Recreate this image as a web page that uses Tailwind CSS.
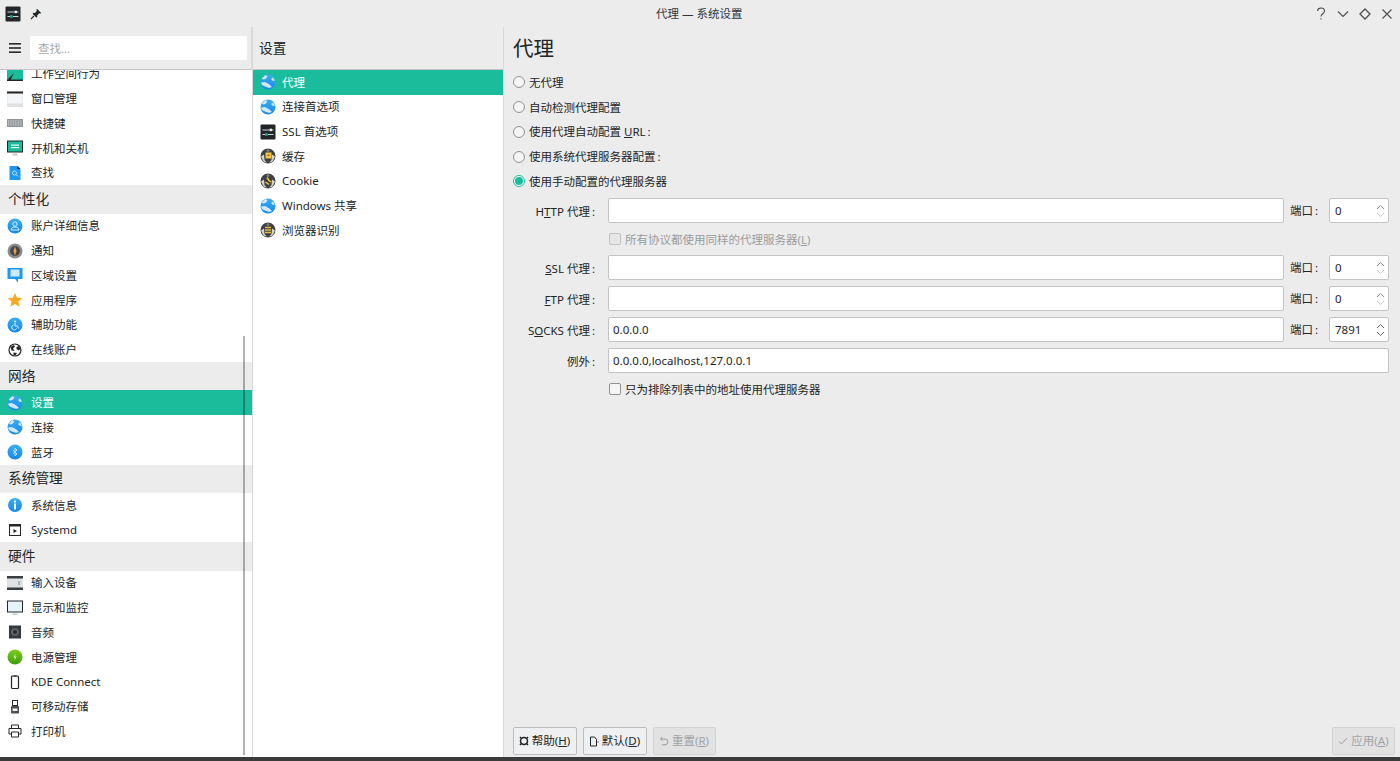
<!DOCTYPE html>
<html lang="zh-CN">
<head>
    <meta charset="UTF-8">
    <meta name="viewport" content="width=device-width, initial-scale=1.0">
    <title>代理 — 系统设置</title>
    <script src="https://cdn.jsdelivr.net/npm/@tailwindcss/browser@4"></script>
</head>
<body class="w-[1400px] h-[761px] overflow-hidden flex flex-col bg-[#ececec] text-[#232627] text-[11.5px] font-['Noto_Sans','Noto_Sans_CJK_SC',sans-serif]">

    <!-- shared icons -->
    <svg class="absolute w-0 h-0">
        <defs>
            <linearGradient id="blue" x1="0" y1="0" x2="0" y2="1">
                <stop offset="0" stop-color="#3daee9"/>
                <stop offset="1" stop-color="#1288f0"/>
            </linearGradient>
            <linearGradient id="green" x1="0" y1="0" x2="0" y2="1">
                <stop offset="0" stop-color="#7ccf1e"/>
                <stop offset="1" stop-color="#3f9c0c"/>
            </linearGradient>
            <symbol id="globe" viewBox="0 0 16 16">
                <circle cx="8" cy="8" r="7.5" fill="url(#blue)"/>
                <path d="M1.800 4.500 5.500 1 7.500 2.500 5.500 5 3 5.500ZM1 8.500 5 8 9.500 10.500 12 13 9 14 5 12.500 2 11ZM11 5 13 3.500 15 6.500 13 7Z" fill="#cfe9fc"/>
            </symbol>
            <symbol id="sliders" viewBox="0 0 16 16">
                <rect x="0.5" y="0.5" width="15" height="15" rx="1" fill="#232629"/>
                <path d="M2.500 6H9M12 6h1.500M2.500 10.500H5M8 10.500h5.500" stroke="#cfd4d6" stroke-width="1"/>
                <rect x="9.500" y="4.700" width="2.400" height="2.400" fill="#fff"/>
                <rect x="5.200" y="9.300" width="2.400" height="2.400" fill="#1abc9c"/>
            </symbol>
            <symbol id="gear" viewBox="0 0 16 16">
                <circle cx="8" cy="8" r="7.500" fill="#3f4042"/>
                <path d="M1 8.500 4 6.500 4.500 12 7 14.800 3.500 13.500ZM15 8.500 12 6.500 11.500 12 9 14.800 12.500 13.500Z" fill="#d6d3c8"/>
                <circle cx="8" cy="2.500" r="1.500" fill="#77797b"/>
            </symbol>
        </defs>
    </svg>

    <!-- title bar -->
    <header class="h-[27px] shrink-0 relative flex items-center justify-between pl-[5px] pr-[6px]">
        <div class="flex items-center gap-[9px]">
            <svg class="w-[16px] h-[16px]"><use href="#sliders"/></svg>
            <svg class="w-[12px] h-[12px]" viewBox="0 0 12 12"><path d="M7 .8 11.200 5 10 5.700 9.200 5.200 7.200 7.400 7.300 9 6.300 9.600 2.600 5.800 3.200 4.800 4.800 4.900 6.900 2.900 6.400 2Z" fill="#232629"/><path d="M4 7.800 1 11" stroke="#232629" stroke-width="1.200"/></svg>
        </div>
        <div class="absolute left-[656px] top-[5px] leading-[17px] text-[#31363b]">代理 — 系统设置</div>
        <div class="flex items-center gap-[8px]">
            <svg class="w-[14px] h-[14px]" viewBox="0 0 14 14" fill="none" stroke="#4d4d4d" stroke-width="1.100"><path d="M3.500 4C3.700 2 5.200 1 7 1c2 0 3.500 1.200 3.500 3 0 2.700-3.500 2.700-3.500 5.500"/><path d="M7 11.300v1.300"/></svg>
            <svg class="w-[14px] h-[14px]" viewBox="0 0 14 14" fill="none" stroke="#4d4d4d" stroke-width="1.100"><path d="M2 4.500 7 9.500 12 4.500"/></svg>
            <svg class="w-[14px] h-[14px]" viewBox="0 0 14 14" fill="none" stroke="#4d4d4d" stroke-width="1.300"><path d="M7 2 12 7 7 12 2 7Z"/></svg>
            <svg class="w-[14px] h-[14px]" viewBox="0 0 14 14" fill="none" stroke="#4d4d4d" stroke-width="1.100"><path d="M2.500 2.500 11.500 11.500M11.500 2.500 2.500 11.500"/></svg>
        </div>
    </header>

    <main class="flex-1 flex min-h-0">
        <!-- left sidebar -->
        <aside class="w-[252px] shrink-0 flex flex-col relative">
            <div class="h-[43px] shrink-0 flex items-center pl-[9px] pr-[4px] gap-[9px] border-b border-[#c6c6c6] border-r-[#dcdcdc] border-r">
                <svg class="w-[12px] h-[10px]" viewBox="0 0 12 10" fill="#232629"><rect width="12" height="1.600"/><rect y="4.200" width="12" height="1.600"/><rect y="8.400" width="12" height="1.600"/></svg>
                <input type="text" placeholder="查找..." class="w-[218px] h-[24px] bg-white px-[8px] outline-none placeholder:text-[#a8a8a8]">
            </div>
            <div class="flex-1 bg-white overflow-hidden min-h-0">
                <div class="-mt-[8.5px]">
                    <div class="h-[24.75px] flex items-center pl-[7px] gap-[8px]">
                        <svg class="w-[16px] h-[16px]" viewBox="0 0 16 16"><rect y="1" width="16" height="14" fill="#1abc9c"/><path d="M1 13 7 7 3 15Z" fill="#232629"/><rect y="13.500" width="16" height="1.500" fill="#232629"/></svg><span>工作空间行为</span>
                    </div>
                    <div class="h-[24.75px] flex items-center pl-[7px] gap-[8px]">
                        <svg class="w-[16px] h-[16px]" viewBox="0 0 16 16"><rect y="0.500" width="16" height="15" fill="#f4f5f6" stroke="#d5d8da" stroke-width=".6"/><rect y="0.500" width="16" height="2" fill="#232629"/><rect y="12.500" width="16" height="3" fill="#dfe2e4"/></svg><span>窗口管理</span>
                    </div>
                    <div class="h-[24.75px] flex items-center pl-[7px] gap-[8px]">
                        <svg class="w-[16px] h-[16px]" viewBox="0 0 16 16"><rect y="4" width="16" height="8" rx=".5" fill="#8f9496"/><path d="M1 6h14M1 8h14M1 10h14" stroke="#e4e6e7" stroke-width=".9" stroke-dasharray="1 .7"/></svg><span>快捷键</span>
                    </div>
                    <div class="h-[24.75px] flex items-center pl-[7px] gap-[8px]">
                        <svg class="w-[16px] h-[16px]" viewBox="0 0 16 16"><rect y="0.500" width="16" height="12" fill="#232629"/><rect x="1" y="1.500" width="14" height="10" fill="#1abc9c"/><rect x="4" y="4.500" width="8" height="1.200" fill="#e8fff9"/><rect x="4" y="7" width="8" height="1.200" fill="#e8fff9"/><rect x="5.500" y="13.500" width="5" height="2" fill="#c5c8ca"/></svg><span>开机和关机</span>
                    </div>
                    <div class="h-[24.75px] flex items-center pl-[7px] gap-[8px]">
                        <svg class="w-[16px] h-[16px]" viewBox="0 0 16 16"><path d="M2.500 1H10.500L13.500 4V15H2.500Z" fill="#1d99f3"/><path d="M10.500 1 13.500 4H10.500Z" fill="#232629"/><circle cx="7.500" cy="8" r="2" fill="none" stroke="#bfe3ff"/><path d="M9 9.500 11 11.500" stroke="#bfe3ff"/></svg><span>查找</span>
                    </div>

                    <div class="h-[28.25px] bg-[#ececec] pl-[8px] flex items-center text-[13.7px]">个性化</div>
                    <div class="h-[24.75px] flex items-center pl-[7px] gap-[8px]">
                        <svg class="w-[16px] h-[16px]" viewBox="0 0 16 16"><circle cx="8" cy="8" r="7.500" fill="url(#blue)"/><circle cx="8" cy="6" r="2.200" fill="none" stroke="#d9efff"/><path d="M4 12c0-4 8-4 8 0Z" fill="none" stroke="#d9efff"/></svg><span>账户详细信息</span>
                    </div>
                    <div class="h-[24.75px] flex items-center pl-[7px] gap-[8px]">
                        <svg class="w-[16px] h-[16px]" viewBox="0 0 16 16"><circle cx="8" cy="8" r="7.500" fill="#8a8c8e"/><circle cx="8" cy="8" r="5" fill="#45474a"/><path d="M8 3.500 9.500 8 8 12.500 6.500 8Z" fill="#f2a03d"/></svg><span>通知</span>
                    </div>
                    <div class="h-[24.75px] flex items-center pl-[7px] gap-[8px]">
                        <svg class="w-[16px] h-[16px]" viewBox="0 0 16 16"><path d="M0.500 1H15.500V12H11V15.500L8 12H0.500Z" fill="#1d99f3"/><rect x="3.500" y="2.500" width="9" height="7" fill="#cfe9fc"/></svg><span>区域设置</span>
                    </div>
                    <div class="h-[24.75px] flex items-center pl-[7px] gap-[8px]">
                        <svg class="w-[16px] h-[16px]" viewBox="0 0 16 16"><path d="M8 1 10.100 5.700 15.300 6.200 11.400 9.600 12.600 14.700 8 12 3.400 14.700 4.600 9.600 .7 6.200 5.900 5.700Z" fill="#f9a825"/></svg><span>应用程序</span>
                    </div>
                    <div class="h-[24.75px] flex items-center pl-[7px] gap-[8px]">
                        <svg class="w-[16px] h-[16px]" viewBox="0 0 16 16"><circle cx="8" cy="8" r="7.500" fill="url(#blue)"/><circle cx="8" cy="4.500" r="1" fill="#e4f3ff"/><path d="M8 6V9H10.500L11.500 11.500M6.500 8a2.500 2.500 0 1 0 3 3.500" fill="none" stroke="#e4f3ff"/></svg><span>辅助功能</span>
                    </div>
                    <div class="h-[24.75px] flex items-center pl-[7px] gap-[8px]">
                        <svg class="w-[16px] h-[16px]" viewBox="0 0 16 16"><circle cx="8" cy="8" r="6" fill="#fff" stroke="#232629" stroke-width="1.200"/><path d="M3.500 5 7 3 8 4.500 6 6.500 7.500 9 4.500 8.500ZM9.500 5 12 4 13.500 7 11.500 8.500 9.500 7ZM6.500 10.500 10 11 8.500 13.500 6.500 13Z" fill="#232629"/></svg><span>在线账户</span>
                    </div>

                    <div class="h-[28.25px] bg-[#ececec] pl-[8px] flex items-center text-[13.7px]">网络</div>
                    <div class="h-[24.75px] flex items-center pl-[7px] gap-[8px] bg-[#1abc9c] text-white">
                        <svg class="w-[16px] h-[16px]"><use href="#globe"/></svg><span>设置</span>
                    </div>
                    <div class="h-[24.75px] flex items-center pl-[7px] gap-[8px]">
                        <svg class="w-[16px] h-[16px]"><use href="#globe"/></svg><span>连接</span>
                    </div>
                    <div class="h-[24.75px] flex items-center pl-[7px] gap-[8px]">
                        <svg class="w-[16px] h-[16px]" viewBox="0 0 16 16"><circle cx="8" cy="8" r="7.500" fill="url(#blue)"/><path d="M5.800 6 10 10 8 12V4L10 6 5.800 10" fill="none" stroke="#d9efff" stroke-width=".8"/></svg><span>蓝牙</span>
                    </div>

                    <div class="h-[28.25px] bg-[#ececec] pl-[8px] flex items-center text-[13.7px]">系统管理</div>
                    <div class="h-[24.75px] flex items-center pl-[7px] gap-[8px]">
                        <svg class="w-[16px] h-[16px]" viewBox="0 0 16 16"><circle cx="8" cy="8" r="7" fill="url(#blue)"/><rect x="7" y="3.500" width="2" height="2" fill="#fff"/><rect x="7" y="6.500" width="2" height="6" fill="#fff"/></svg><span>系统信息</span>
                    </div>
                    <div class="h-[24.75px] flex items-center pl-[7px] gap-[8px]">
                        <svg class="w-[16px] h-[16px]" viewBox="0 0 16 16"><rect x="2.500" y="2.500" width="11" height="11" fill="#fcfcfc" stroke="#232629"/><rect x="2" y="2" width="12" height="2.500" fill="#232629"/><path d="M6.500 7 10 9 6.500 11Z" fill="#232629"/></svg><span>Systemd</span>
                    </div>

                    <div class="h-[28.25px] bg-[#ececec] pl-[8px] flex items-center text-[13.7px]">硬件</div>
                    <div class="h-[24.75px] flex items-center pl-[7px] gap-[8px]">
                        <svg class="w-[16px] h-[16px]" viewBox="0 0 16 16"><rect y="1" width="16" height="14" fill="#dfe2e3"/><rect y="1" width="16" height="2.500" fill="#3a3d40"/><rect y="12.500" width="16" height="2.500" fill="#3a3d40"/><rect x="11.500" y="6" width="1" height="4" fill="#7d8184"/></svg><span>输入设备</span>
                    </div>
                    <div class="h-[24.75px] flex items-center pl-[7px] gap-[8px]">
                        <svg class="w-[16px] h-[16px]" viewBox="0 0 16 16"><rect y="0.500" width="16" height="12" fill="#232629"/><rect x="1" y="1.500" width="14" height="10" fill="#e6f3fb"/><rect x="5.500" y="13.500" width="5" height="1.500" fill="#c5c8ca"/></svg><span>显示和监控</span>
                    </div>
                    <div class="h-[24.75px] flex items-center pl-[7px] gap-[8px]">
                        <svg class="w-[16px] h-[16px]" viewBox="0 0 16 16"><rect x="2" y="1.500" width="12" height="13" fill="#35383b"/><circle cx="8" cy="8" r="4" fill="#5b6064"/><circle cx="8" cy="8" r="1.800" fill="#232629"/></svg><span>音频</span>
                    </div>
                    <div class="h-[24.75px] flex items-center pl-[7px] gap-[8px]">
                        <svg class="w-[16px] h-[16px]" viewBox="0 0 16 16"><circle cx="8" cy="8" r="7.500" fill="url(#green)"/><path d="M8.700 4.500 6.500 8.500H8L7.300 11.500 9.500 7.500H8Z" fill="#f2ffe0"/></svg><span>电源管理</span>
                    </div>
                    <div class="h-[24.75px] flex items-center pl-[7px] gap-[8px]">
                        <svg class="w-[16px] h-[16px]" viewBox="0 0 16 16"><rect x="4.500" y="2" width="7" height="12.500" rx="1" fill="#fcfcfc" stroke="#232629" stroke-width="1.200"/><rect x="6.500" y="1.500" width="3" height="1.200" fill="#232629"/></svg><span>KDE Connect</span>
                    </div>
                    <div class="h-[24.75px] flex items-center pl-[7px] gap-[8px]">
                        <svg class="w-[16px] h-[16px]" viewBox="0 0 16 16"><rect x="5.500" y="1.500" width="5" height="5" fill="none" stroke="#232629"/><rect x="4" y="7" width="8" height="7.500" rx="1" fill="#4d5053"/><rect x="5.500" y="9.500" width="5" height="2.500" fill="#eee"/></svg><span>可移动存储</span>
                    </div>
                    <div class="h-[24.75px] flex items-center pl-[7px] gap-[8px]">
                        <svg class="w-[16px] h-[16px]" viewBox="0 0 16 16" fill="none" stroke="#232629"><path d="M4.500 5V2H11.500V5"/><path d="M4 11H2V5.500H14V11H12"/><path d="M4.500 9H11.500V14H4.500Z"/></svg><span>打印机</span>
                    </div>
                </div>
            </div>
            <!-- overlay scrollbar -->
            <div class="absolute left-[243px] top-[309px] h-[419px] w-[2px] bg-black/30"></div>
        </aside>

        <!-- middle list -->
        <section class="w-[252px] shrink-0 flex flex-col border-l border-[#d8d8d8] border-r">
            <div class="h-[43px] shrink-0 flex items-center pl-[6px] pt-[1px] text-[13.7px] border-b border-[#c6c6c6]">设置</div>
            <div class="flex-1 bg-white">
                <div class="h-[24.7px] flex items-center pl-[7px] gap-[6px] bg-[#1abc9c] text-white">
                    <svg class="w-[16px] h-[16px]"><use href="#globe"/></svg><span>代理</span>
                </div>
                <div class="h-[24.7px] flex items-center pl-[7px] gap-[6px]">
                    <svg class="w-[16px] h-[16px]"><use href="#globe"/></svg><span>连接首选项</span>
                </div>
                <div class="h-[24.7px] flex items-center pl-[7px] gap-[6px]">
                    <svg class="w-[16px] h-[16px]"><use href="#sliders"/></svg><span>SSL 首选项</span>
                </div>
                <div class="h-[24.7px] flex items-center pl-[7px] gap-[6px]">
                    <svg class="w-[16px] h-[16px]" viewBox="0 0 16 16"><use href="#gear" width="16" height="16"/><rect x="5.500" y="4.500" width="6" height="6" fill="#f3c93f"/><rect x="7.500" y="6.500" width="2" height="1.500" fill="#8a6d10"/></svg><span>缓存</span>
                </div>
                <div class="h-[24.7px] flex items-center pl-[7px] gap-[6px]">
                    <svg class="w-[16px] h-[16px]" viewBox="0 0 16 16"><use href="#gear" width="16" height="16"/><path d="M7 4.500 9 7.500 11 9M5.500 9 9 11.500" stroke="#f3c93f" stroke-width="1.500" fill="none"/></svg><span>Cookie</span>
                </div>
                <div class="h-[24.7px] flex items-center pl-[7px] gap-[6px]">
                    <svg class="w-[16px] h-[16px]"><use href="#globe"/></svg><span>Windows 共享</span>
                </div>
                <div class="h-[24.7px] flex items-center pl-[7px] gap-[6px]">
                    <svg class="w-[16px] h-[16px]" viewBox="0 0 16 16"><use href="#gear" width="16" height="16"/><path d="M5 5.500H11M5 8H11M5 10.500H11" stroke="#e0b93a" stroke-width="1.300"/></svg><span>浏览器识别</span>
                </div>
            </div>
        </section>

        <!-- proxy page -->
        <section class="flex-1 min-w-0 flex flex-col pl-[9px] pr-[11px] pb-[2px]">
            <h1 class="h-[43px] shrink-0 flex items-center text-[20.5px] font-normal">代理</h1>

            <div>
                <label class="h-[24.75px] flex items-center gap-[4px]"><span class="w-[12px] h-[12px] rounded-full border border-[#8f9294] bg-[#f5f5f5]"></span>无代理</label>
                <label class="h-[24.75px] flex items-center gap-[4px]"><span class="w-[12px] h-[12px] rounded-full border border-[#8f9294] bg-[#f5f5f5]"></span>自动检测代理配置</label>
                <label class="h-[24.75px] flex items-center gap-[4px]"><span class="w-[12px] h-[12px] rounded-full border border-[#8f9294] bg-[#f5f5f5]"></span><span>使用代理自动配置 <u>U</u>RL<span class="ml-[2px]">:</span></span></label>
                <label class="h-[24.75px] flex items-center gap-[4px]"><span class="w-[12px] h-[12px] rounded-full border border-[#8f9294] bg-[#f5f5f5]"></span><span>使用系统代理服务器配置<span class="ml-[2px]">:</span></span></label>
                <label class="h-[24.75px] flex items-center gap-[4px]"><span class="w-[12px] h-[12px] rounded-full border border-[#1abc9c] bg-white flex items-center justify-center"><span class="w-[8px] h-[8px] rounded-full bg-[#1abc9c]"></span></span>使用手动配置的代理服务器</label>
            </div>

            <div class="mt-[4px] grid grid-cols-[83px_688px_45px_60px] gap-y-[6px] items-center">
                <div class="text-right pt-[2px] pr-[1px]">H<u>T</u>TP 代理<span class="ml-[2px]">:</span></div>
                <input type="text" class="ml-[12px] w-[676px] h-[25px] bg-white border border-[#c4c4c4] rounded-[2px] px-[4px] pt-[1px] outline-none">
                <div class="pl-[6px] pt-[1px]">端口<span class="ml-[2px]">:</span></div>
                <div class="h-[25px] bg-white border border-[#c4c4c4] rounded-[2px] pl-[5px] pt-[1px] flex items-center justify-between pr-[3px]">0
                    <svg class="w-[9px] h-[14px]" viewBox="0 0 9 14" fill="none" stroke="#8a8d8f"><path d="M1 5 4.500 1.500 8 5"/><path d="M1 9 4.500 12.500 8 9" stroke="#c8cacb"/></svg>
                </div>

                <div class="col-start-2 col-span-3 h-[20px] flex items-center gap-[4px] pl-[13px] pt-[1px] text-[#9a9c9e]">
                    <span class="w-[12px] h-[12px] rounded-[2px] border border-[#c0c2c3] bg-[#e6e6e6]"></span><span>所有协议都使用同样的代理服务器(<u>L</u>)</span>
                </div>

                <div class="text-right pt-[2px] pr-[1px]"><u>S</u>SL 代理<span class="ml-[2px]">:</span></div>
                <input type="text" class="ml-[12px] w-[676px] h-[25px] bg-white border border-[#c4c4c4] rounded-[2px] px-[4px] pt-[1px] outline-none">
                <div class="pl-[6px] pt-[1px]">端口<span class="ml-[2px]">:</span></div>
                <div class="h-[25px] bg-white border border-[#c4c4c4] rounded-[2px] pl-[5px] pt-[1px] flex items-center justify-between pr-[3px]">0
                    <svg class="w-[9px] h-[14px]" viewBox="0 0 9 14" fill="none" stroke="#8a8d8f"><path d="M1 5 4.500 1.500 8 5"/><path d="M1 9 4.500 12.500 8 9" stroke="#c8cacb"/></svg>
                </div>

                <div class="text-right pt-[2px] pr-[1px]"><u>F</u>TP 代理<span class="ml-[2px]">:</span></div>
                <input type="text" class="ml-[12px] w-[676px] h-[25px] bg-white border border-[#c4c4c4] rounded-[2px] px-[4px] pt-[1px] outline-none">
                <div class="pl-[6px] pt-[1px]">端口<span class="ml-[2px]">:</span></div>
                <div class="h-[25px] bg-white border border-[#c4c4c4] rounded-[2px] pl-[5px] pt-[1px] flex items-center justify-between pr-[3px]">0
                    <svg class="w-[9px] h-[14px]" viewBox="0 0 9 14" fill="none" stroke="#8a8d8f"><path d="M1 5 4.500 1.500 8 5"/><path d="M1 9 4.500 12.500 8 9" stroke="#c8cacb"/></svg>
                </div>

                <div class="text-right pt-[2px] pr-[1px]">S<u>O</u>CKS 代理<span class="ml-[2px]">:</span></div>
                <input type="text" value="0.0.0.0" class="ml-[12px] w-[676px] h-[25px] bg-white border border-[#c4c4c4] rounded-[2px] px-[4px] pt-[1px] outline-none">
                <div class="pl-[6px] pt-[1px]">端口<span class="ml-[2px]">:</span></div>
                <div class="h-[25px] bg-white border border-[#c4c4c4] rounded-[2px] pl-[5px] pt-[1px] flex items-center justify-between pr-[3px]">7891
                    <svg class="w-[9px] h-[14px]" viewBox="0 0 9 14" fill="none" stroke="#6a6d6f"><path d="M1 5 4.500 1.500 8 5"/><path d="M1 9 4.500 12.500 8 9"/></svg>
                </div>

                <div class="text-right pt-[2px] pr-[1px]">例外<span class="ml-[2px]">:</span></div>
                <input type="text" value="0.0.0.0,localhost,127.0.0.1" class="col-span-3 ml-[12px] w-[781px] h-[25px] bg-white border border-[#c4c4c4] rounded-[2px] px-[4px] pt-[1px] outline-none">

                <div class="col-start-2 col-span-3 h-[20px] flex items-center gap-[4px] pl-[13px] pt-[1px]">
                    <span class="w-[12px] h-[12px] rounded-[2px] border border-[#8f9294] bg-[#f5f5f5]"></span><span>只为排除列表中的地址使用代理服务器</span>
                </div>
            </div>

            <footer class="mt-auto -ml-[0.5px] flex items-center gap-[6px]">
                <button class="w-[64px] h-[28px] flex items-center justify-center gap-[3px] border border-[#bdbdbd] rounded-[2px] bg-[#eff0f1]">
                    <svg class="w-[10px] h-[10px]" viewBox="0 0 10 10" fill="none" stroke="#232629" stroke-width="1.500"><circle cx="5" cy="5" r="3.500"/><path d="M1 1 3 3M9 1 7 3M1 9 3 7M9 9 7 7"/></svg><span>帮助(<u>H</u>)</span>
                </button>
                <button class="w-[64px] h-[28px] flex items-center justify-center gap-[3px] border border-[#bdbdbd] rounded-[2px] bg-[#eff0f1]">
                    <svg class="w-[10px] h-[11px]" viewBox="0 0 10 11" fill="none" stroke="#232629"><path d="M1.500 1H5.500L7.500 3.500V10H1.500Z"/><path d="M9 5.500 9.500 6 9 6.500"/></svg><span>默认(<u>D</u>)</span>
                </button>
                <button class="w-[63px] h-[28px] flex items-center justify-center gap-[3px] border border-[#d2d2d2] rounded-[2px] bg-[#e2e2e2] text-[#a0a2a4]">
                    <svg class="w-[10px] h-[10px]" viewBox="0 0 10 10" fill="none" stroke="#9a9c9e"><path d="M3 1 1.500 3 3.500 4.500"/><path d="M1.500 3H6A2.800 2.800 0 0 1 6 8.800H3"/></svg><span>重置(<u>R</u>)</span>
                </button>
                <button class="ml-auto -mr-[6px] w-[63px] h-[28px] flex items-center justify-center gap-[3px] border border-[#d2d2d2] rounded-[2px] bg-[#e2e2e2] text-[#a0a2a4]">
                    <svg class="w-[10px] h-[10px]" viewBox="0 0 10 10" fill="none" stroke="#9a9c9e"><path d="M1 5.500 3.500 8 9 2"/></svg><span>应用(<u>A</u>)</span>
                </button>
            </footer>
        </section>
    </main>

    <div class="h-[4px] shrink-0 bg-[#3b3b3d]"></div>
</body>
</html>
